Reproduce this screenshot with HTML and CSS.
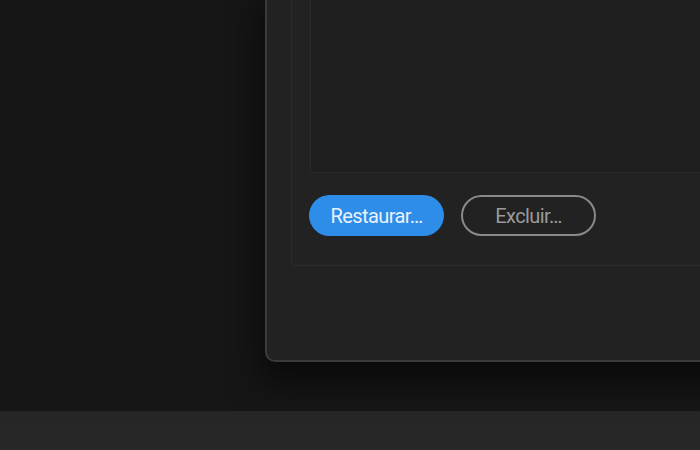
FILE: index.html
```html
<!DOCTYPE html>
<html lang="pt-BR">
<head>
<meta charset="utf-8">
<title>Restaurar</title>
<link rel="stylesheet" href="styles.css">
</head>
<body>
  <div class="desk">
    <div class="dialog">
      <div class="panel">
        <div class="listbox"></div>
        <div class="actions">
          <button class="btn btn-primary">Restaurar…</button>
          <button class="btn btn-secondary">Excluir…</button>
        </div>
      </div>
    </div>
  </div>
  <div class="bottombar"></div>
</body>
</html>
```

FILE: styles.css
```css
html, body {
  margin: 0;
  height: 450px;
}
body {
  background: #161616;
  overflow: hidden;
  display: flex;
  flex-direction: column;
  font-family: Roboto, "Liberation Sans", sans-serif;
}
.desk {
  height: 411px;
  display: flex;
  align-items: flex-start;
  padding-left: 265px;
  overflow: hidden;
}
.dialog {
  box-sizing: border-box;
  margin-top: -20px;
  height: 382px;
  width: 520px;
  flex: none;
  background: #222222;
  border: 2px solid #3a3a3a;
  border-radius: 0 0 0 10px;
  padding: 0 0 94px 24px;
  display: flex;
  flex-direction: column;
  box-shadow: -6px 22px 34px rgba(0, 0, 0, 0.55);
}
.panel {
  flex: 1;
  display: flex;
  flex-direction: column;
  border: 1px solid #2c2c2c;
  border-top: none;
  border-right: none;
  border-radius: 0 0 0 4px;
  padding: 0 0 29px 18px;
}
.listbox {
  flex: 1;
  background: #1e1e1e;
  border: 1px solid #2c2c2c;
  border-top: none;
  border-right: none;
  border-radius: 0 0 0 3px;
}
.actions {
  display: flex;
  gap: 17px;
  margin-top: 22px;
  margin-left: -1px;
}
.btn {
  box-sizing: border-box;
  width: 135px;
  height: 41px;
  border-radius: 21px;
  font-family: Roboto, "Liberation Sans", sans-serif;
  font-size: 20px;
  letter-spacing: -0.6px;
  padding: 0;
  display: flex;
  align-items: center;
  justify-content: center;
}
.btn-primary {
  background: #2d8de9;
  border: none;
  color: #e9f2fc;
}
.btn-secondary {
  background: transparent;
  border: 2px solid #8a8a8a;
  color: #9a9a9a;
}
.bottombar {
  height: 39px;
  background: linear-gradient(180deg, #262626 0%, #282828 100%);
}
```
